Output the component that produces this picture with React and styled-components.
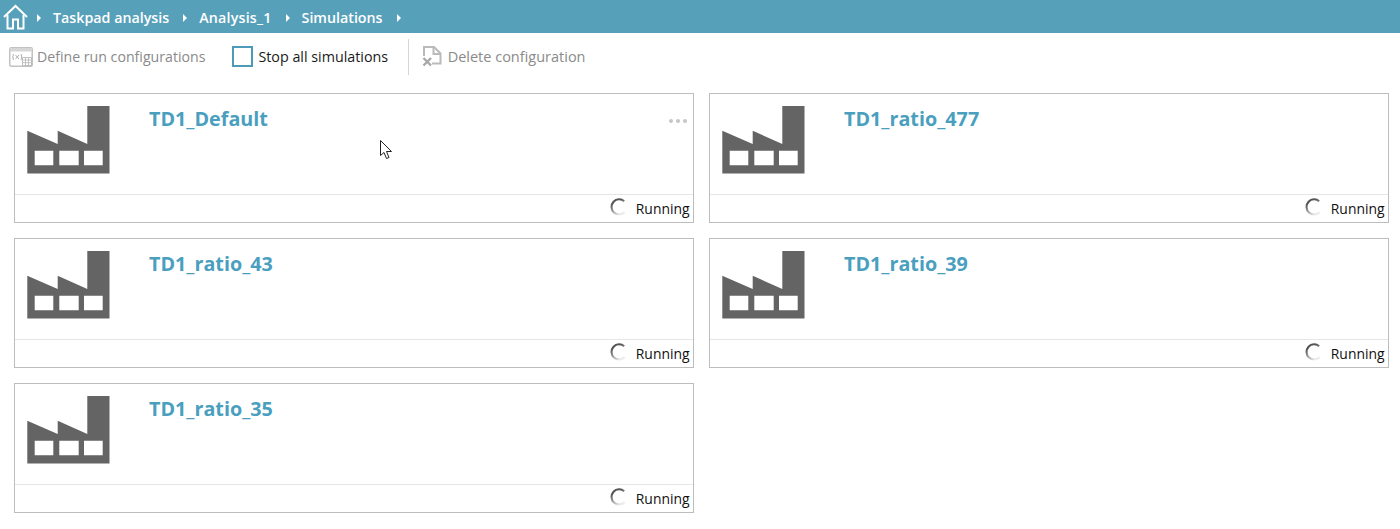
import React from 'react'
import styled, { createGlobalStyle } from 'styled-components'

const GlobalStyle = createGlobalStyle`
    html, body {
        margin: 0;
        padding: 0;
        background: white;
        font-family: "Open Sans", "Noto Sans", "Liberation Sans", sans-serif;
    }
`

const Page = styled.div`
    position: relative;
    width: 1400px;
    height: 529px;
    overflow: hidden;
    background: white;
`

const Breadcrumb = styled.div`
    height: 33px;
    background: #57a0ba;
    display: flex;
    align-items: center;
    padding-left: 3px;
    color: white;
    font-size: 14.25px;
    font-weight: 600;
`

const Crumb = styled.span`
    margin: 2px 14px 0 12px;
    letter-spacing: ${props => props.$spacing || 0}px;
    white-space: nowrap;
`

const Arrow = styled.span`
    width: 0;
    height: 0;
    margin-top: 2px;
    margin-left: ${props => props.$first ? '9px' : '0'};
    border-left: 4px solid white;
    border-top: 4px solid transparent;
    border-bottom: 4px solid transparent;
`

const Toolbar = styled.div`
    height: 47px;
    display: flex;
    align-items: center;
    padding-left: 9px;
`

const Tool = styled.div`
    display: flex;
    align-items: center;
    gap: ${props => props.$gap}px;
    margin-left: ${props => props.$offset || 0}px;
    font-size: ${props => props.$size}px;
    color: ${props => props.$active ? '#1a1a1a' : '#8a8a8a'};
    white-space: nowrap;
`

const CheckBox = styled.span`
    width: 17px;
    height: 17px;
    border: 2px solid #4f9ab8;
    background: white;
`

const Divider = styled.span`
    width: 1px;
    height: 36px;
    margin: 0 13px 0 19.5px;
    background: #d5d5d5;
`

const Grid = styled.div`
    display: grid;
    grid-template-columns: 680px 680px;
    grid-auto-rows: 130px;
    gap: 15px;
    padding: 13px 0 0 14px;
`

const Card = styled.div`
    position: relative;
    box-sizing: border-box;
    border: 1px solid #bdbdbd;
    display: flex;
    flex-direction: column;
    background: white;
`

const CardBody = styled.div`
    flex: 1;
    display: flex;
    align-items: flex-start;
    padding: 12px 0 0 12px;
`

const Title = styled.div`
    margin-left: 39px;
    font-size: 19.75px;
    line-height: 26px;
    font-weight: 700;
    color: #4a9fbf;
`

const Dots = styled.div`
    position: absolute;
    top: 25px;
    right: 6px;
    display: flex;
    gap: 3px;
`

const Dot = styled.span`
    width: 4px;
    height: 4px;
    border-radius: 50%;
    background: #c6c6c6;
`

const CardFooter = styled.div`
    height: 27px;
    border-top: 1px solid #e6e6e6;
    display: flex;
    align-items: center;
    justify-content: flex-end;
    padding-right: 3.5px;
    gap: 8px;
    font-size: 13.9px;
    color: #111;
`

const Cursor = styled.svg`
    position: absolute;
    left: 380px;
    top: 140px;
`

const SpinnerIcon = styled.svg`
    margin-bottom: 3px;
`

function HomeIcon() {
    return (
        <svg width="25" height="26" viewBox="0 0 25 26" fill="none" stroke="white" strokeWidth="2">
            <path d="M1 13 L12.5 2 L24 13" strokeLinejoin="miter" />
            <path d="M4.5 11 V24.5 H10 V15.5 H15 V24.5 H20.5 V11" />
        </svg>
    )
}

function ConfigIcon() {
    return (
        <svg width="24" height="20" viewBox="0 0 24 20">
            <rect x="0.75" y="0.75" width="22.5" height="18.5" rx="1.5" fill="white" stroke="#c2c2c2" strokeWidth="1.5" />
            <rect x="1" y="1" width="22" height="3.5" fill="#d6d6d6" />
            <path d="M4.5 7 Q3 10 4.5 13 M12 7 Q13.5 10 12 13 M6.5 8 L10 12 M10 8 L6.5 12" fill="none" stroke="#a6a6a6" strokeWidth="0.9" />
            <path d="M13.5 10.5 H22.5 V18.5 H13.5 Z M13.5 13 H22.5 M13.5 15.7 H22.5 M16.5 10.5 V18.5 M19.5 10.5 V18.5" fill="none" stroke="#b4b4b4" strokeWidth="0.8" />
        </svg>
    )
}

function DeleteIcon() {
    return (
        <svg width="20" height="21" viewBox="0 0 20 21" fill="none" stroke="#bababa" strokeWidth="2">
            <path d="M2 10 V1 H12 L18.5 7.5 V17.5 H10" />
            <path d="M11.5 1 V8 H18.5" />
            <path d="M1.5 12 L9 19.5 M9 12 L1.5 19.5" stroke="#a8a8a8" strokeWidth="2.4" />
        </svg>
    )
}

function FactoryIcon() {
    return (
        <svg width="83" height="68" viewBox="0 0 83 68">
            <path fillRule="evenodd" fill="#646464" d="M0.3 24.7 L30.7 38 V24.7 L60.3 38 V0 H82.5 V67.4 H0.3 Z M7.7 44.7 V59.3 H26.3 V44.7 Z M32.3 44.7 V59.3 H51.7 V44.7 Z M57 44.7 V59.3 H75.7 V44.7 Z" />
        </svg>
    )
}

function Spinner() {
    return (
        <SpinnerIcon width="18" height="18" viewBox="0 0 18 18" fill="none">
            <defs>
                <linearGradient id="spin" x1="0.3" y1="0.2" x2="0.7" y2="1">
                    <stop offset="0" stopColor="#555" />
                    <stop offset="1" stopColor="#ededed" />
                </linearGradient>
            </defs>
            <path d="M14.2 3.2 A7.6 7.6 0 1 0 14.6 14.2" stroke="url(#spin)" strokeWidth="2.1" />
        </SpinnerIcon>
    )
}

function SimulationCard({ name, showDots }) {
    return (
        <Card>
            <CardBody>
                <FactoryIcon />
                <Title>{name}</Title>
            </CardBody>
            {showDots && <Dots><Dot /><Dot /><Dot /></Dots>}
            <CardFooter>
                <Spinner />
                <span>Running</span>
            </CardFooter>
        </Card>
    )
}

const simulations = ['TD1_Default', 'TD1_ratio_477', 'TD1_ratio_43', 'TD1_ratio_39', 'TD1_ratio_35']

function App() {
    return (
        <Page>
            <GlobalStyle />
            <Breadcrumb>
                <HomeIcon />
                <Arrow $first />
                <Crumb>Taskpad analysis</Crumb>
                <Arrow />
                <Crumb $spacing={0.2}>Analysis_1</Crumb>
                <Arrow />
                <Crumb>Simulations</Crumb>
                <Arrow />
            </Breadcrumb>
            <Toolbar>
                <Tool $gap={4} $size={14.15}>
                    <ConfigIcon />
                    <span>Define run configurations</span>
                </Tool>
                <Tool $active $gap={5} $offset={27} $size={14.3}>
                    <CheckBox />
                    <span>Stop all simulations</span>
                </Tool>
                <Divider />
                <Tool $gap={6} $size={14.5}>
                    <DeleteIcon />
                    <span>Delete configuration</span>
                </Tool>
            </Toolbar>
            <Grid>
                {simulations.map((name, i) => <SimulationCard key={name} name={name} showDots={i === 0} />)}
            </Grid>
            <Cursor width="13" height="20" viewBox="0 0 13 20">
                <path d="M0.5 0.5 V15.5 L4 12.5 L6.5 18.5 L9 17.5 L6.5 11.5 L11.5 11.5 Z" fill="white" stroke="#222" strokeWidth="1" />
            </Cursor>
        </Page>
    )
}

export default App
